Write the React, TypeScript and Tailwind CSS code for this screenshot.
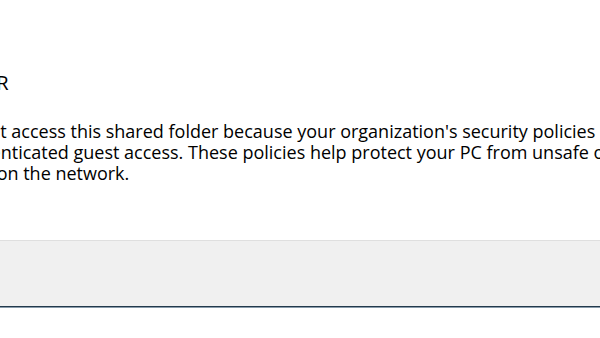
const BODY_LINES = [
  "You can't access this shared folder because your organization's security policies block",
  "unauthenticated guest access. These policies help protect your PC from unsafe or malicious",
  "devices on the network.",
];

export default function App() {
  return (
    <div className="w-[600px] h-[338px] overflow-hidden bg-white text-black font-['Open_Sans',sans-serif]">
      <div className="h-[240px] pt-[69px]">
        <div className="ml-[-70px] w-[760px]">
          <div className="ml-[-6px] text-[20px] leading-[27px] whitespace-nowrap">\\SERVER</div>
          <div className="mt-[25px] text-[18px] leading-[21px]">
            {BODY_LINES.map((line) => (
              <div key={line} className="whitespace-nowrap">
                {line}
              </div>
            ))}
          </div>
        </div>
      </div>
      <div className="h-[66px] border-t border-[#dfdfdf] bg-[#f0f0f0]" />
      <div className="h-px bg-[#233a4c]" />
      <div className="h-px bg-[#8a9cab]" />
    </div>
  );
}
